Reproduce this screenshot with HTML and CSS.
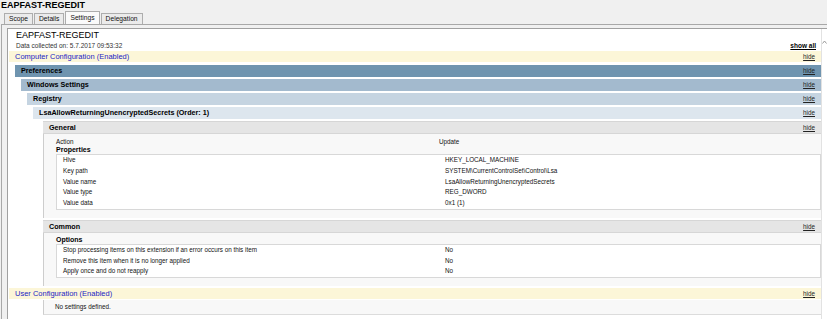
FILE: index.html
```html
<!DOCTYPE html>
<html lang="en">
<head>
    <meta charset="UTF-8">
    <title>EAPFAST-REGEDIT</title>
    <link rel="stylesheet" href="styles.css">
</head>
<body>
    <div class="page-title">EAPFAST-REGEDIT</div>
    <div class="tabs">
        <span class="tab">Scope</span>
        <span class="tab">Details</span>
        <span class="tab active">Settings</span>
        <span class="tab">Delegation</span>
    </div>
    <div class="frame">
        <div class="pane">
            <div class="report">
                <div class="report-title">EAPFAST-REGEDIT</div>
                <div class="collected">
                    <span>Data collected on: 5.7.2017 09:53:32</span>
                    <a class="show-all">show all</a>
                </div>

                <div class="bar config"><span>Computer Configuration (Enabled)</span><a>hide</a></div>
                <div class="level">
                    <div class="bar lvl-1"><span>Preferences</span><a>hide</a></div>
                    <div class="level">
                        <div class="bar lvl-2"><span>Windows Settings</span><a>hide</a></div>
                        <div class="level">
                            <div class="bar lvl-3"><span>Registry</span><a>hide</a></div>
                            <div class="level">
                                <div class="bar lvl-4"><span>LsaAllowReturningUnencryptedSecrets (Order: 1)</span><a>hide</a></div>

                                <div class="section">
                                    <div class="bar sec-bar"><span>General</span><a>hide</a></div>
                                    <div class="sec-body">
                                        <div class="row"><span>Action</span><span>Update</span></div>
                                        <div class="group-title">Properties</div>
                                        <div class="box">
                                            <div class="row"><span>Hive</span><span>HKEY_LOCAL_MACHINE</span></div>
                                            <div class="row"><span>Key path</span><span>SYSTEM\CurrentControlSet\Control\Lsa</span></div>
                                            <div class="row"><span>Value name</span><span>LsaAllowReturningUnencryptedSecrets</span></div>
                                            <div class="row"><span>Value type</span><span>REG_DWORD</span></div>
                                            <div class="row"><span>Value data</span><span>0x1 (1)</span></div>
                                        </div>
                                    </div>
                                </div>

                                <div class="section">
                                    <div class="bar sec-bar"><span>Common</span><a>hide</a></div>
                                    <div class="sec-body">
                                        <div class="group-title">Options</div>
                                        <div class="box">
                                            <div class="row"><span>Stop processing items on this extension if an error occurs on this item</span><span>No</span></div>
                                            <div class="row"><span>Remove this item when it is no longer applied</span><span>No</span></div>
                                            <div class="row"><span>Apply once and do not reapply</span><span>No</span></div>
                                        </div>
                                    </div>
                                </div>
                            </div>
                        </div>
                    </div>
                </div>

                <div class="bar config user"><span>User Configuration (Enabled)</span><a>hide</a></div>
                <div class="empty">No settings defined.</div>
            </div>
            <div class="scroll">
                <svg width="5" height="4" viewBox="0 0 5 4"><path d="M0.5 3.5 L2.5 1 L4.5 3.5" fill="none" stroke="#9a9a9a" stroke-width="1"/></svg>
            </div>
        </div>
    </div>
</body>
</html>
```

FILE: styles.css
```css
body {
    margin: 0;
    height: 319px;
    overflow: hidden;
    background-color: #f0f0f0;
    font-family: "Liberation Sans", Arial, sans-serif;
    color: #111;
}
.page-title {
    font-size: 9px;
    font-weight: bold;
    line-height: 11px;
    padding-left: 1px;
    color: #000;
}
.tabs {
    display: flex;
    align-items: flex-end;
    gap: 1px;
    height: 13px;
    padding-left: 4px;
}
.tab {
    font-size: 6.7px;
    line-height: 10px;
    padding: 0 4px;
    border: 1px solid #adadad;
    border-bottom: none;
    background: #ebebeb;
    color: #111;
}
.tab.active {
    line-height: 12px;
    background: #fafafa;
}
.frame {
    margin-left: 1px;
    padding: 3px 0 0 5px;
    border-top: 1px solid #a8a8a8;
    border-left: 1px solid #a8a8a8;
}
.pane {
    display: flex;
    height: 300px;
    background: #fff;
    border-top: 1px solid #a0a0a0;
    border-left: 1px solid #a0a0a0;
}
.report {
    flex: 1;
    padding-left: 1px;
}
.scroll {
    width: 5px;
    border-left: 1px solid #e2e2e2;
}
.scroll svg {
    display: block;
    margin-top: 11px;
}
.report-title {
    font-size: 9px;
    line-height: 11px;
    padding: 1px 0 0 7px;
    color: #000;
}
.collected {
    display: flex;
    justify-content: space-between;
    font-size: 6.5px;
    line-height: 9px;
    padding: 0 5px 0 7px;
    color: #333;
}
.show-all {
    font-weight: bold;
    text-decoration: underline;
    color: #000;
}
.bar {
    display: flex;
    justify-content: space-between;
    height: 12px;
    line-height: 12px;
    margin-top: 2px;
    padding: 0 6px;
    font-size: 7.2px;
    font-weight: bold;
    color: #000;
}
.bar a {
    font-size: 6.3px;
    font-weight: normal;
    text-decoration: underline;
    color: #222;
}
.config {
    margin-top: 1px;
    height: 11px;
    line-height: 11px;
    font-size: 7.5px;
    font-weight: normal;
    background: #fcf6d8;
    color: #2323c4;
}
.config.user {
    margin-top: 2px;
}
.level {
    margin-left: 6px;
}
.level > .bar:first-child {
    margin-top: 2px;
}
.config + .level > .bar:first-child {
    margin-top: 3px;
}
.lvl-1 { background: #6f94af; }
.lvl-2 { background: #a3bace; }
.lvl-3 { background: #c5d4e1; }
.lvl-4 { background: #dde6ee; }
.section {
    margin: 2px 0 0 10px;
}
.sec-bar {
    margin-top: 0;
    height: 13px;
    line-height: 11px;
    box-sizing: border-box;
    background: #e5e5e5;
    border-top: 1px solid #d6d6d6;
    border-bottom: 1px solid #d6d6d6;
}
.sec-body {
    padding: 3px 0 8px 12px;
    background: #f8f8f8;
    border-left: 1px solid #cdcdcd;
}
.row {
    display: grid;
    grid-template-columns: 383px 1fr;
    font-size: 6.3px;
    line-height: 9px;
    color: #111;
}
.group-title {
    font-size: 7px;
    font-weight: bold;
    line-height: 8px;
    color: #000;
}
.box {
    padding-left: 6px;
    background: #fff;
    border: 1px solid #d8d8d8;
}
.box .row {
    grid-template-columns: 382px 1fr;
    line-height: 10.75px;
}
.empty {
    margin: 1px 0 0 34px;
    padding-left: 11px;
    font-size: 6.3px;
    line-height: 14px;
    color: #111;
    background: #f8f8f8;
    border-left: 1px solid #cdcdcd;
    border-bottom: 1px solid #dcdcdc;
}
```
